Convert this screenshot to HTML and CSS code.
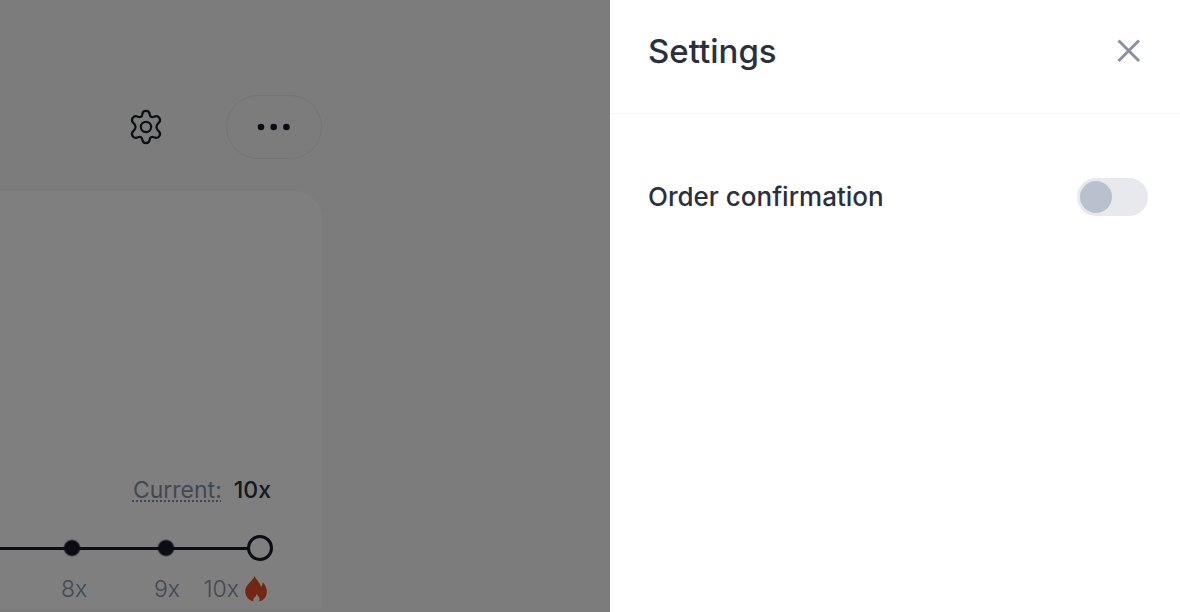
FILE: index.html
```html
<!DOCTYPE html>
<html lang="en">
<head>
<meta charset="utf-8">
<meta name="viewport" content="width=device-width, initial-scale=1">
<title>Settings</title>
<link rel="stylesheet" href="styles.css">
</head>
<body>
<main class="page">
  <div class="toolbar">
    <button class="icon-button" type="button" aria-label="Open settings">
      <svg class="gear" viewBox="0 0 36 36" aria-hidden="true">
        <circle cx="18" cy="18" r="5.1"/>
        <path d="M14.3 5.3C14.5 3 15.9 1.9 18 1.9S21.5 3 21.7 5.3C21.9 7.7 23.8 8.6 25.9 7.7C28.4 6.7 30.4 6.8 31.6 9.3C32.8 11.7 32 13 30.2 14.4C27.9 16.3 27.9 19.7 30.2 21.6C32 23 32.8 24.3 31.6 26.7C30.4 29.2 28.4 29.3 25.9 28.3C23.8 27.4 21.9 28.3 21.7 30.7C21.5 33 20.1 34.1 18 34.1S14.5 33 14.3 30.7C14.1 28.3 12.2 27.4 10.1 28.3C7.6 29.3 5.6 29.2 4.4 26.7C3.2 24.3 4 23 5.8 21.6C8.1 19.7 8.1 16.3 5.8 14.4C4 13 3.2 11.7 4.4 9.3C5.6 6.8 7.6 6.7 10.1 7.7C12.2 8.6 14.1 7.7 14.3 5.3Z"/>
      </svg>
    </button>
    <button class="more-button" type="button" aria-label="More">
      <svg class="dots" viewBox="0 0 34 8" aria-hidden="true"><circle cx="4" cy="4" r="3.3"/><circle cx="16.7" cy="4" r="3.3"/><circle cx="29.4" cy="4" r="3.3"/></svg>
    </button>
  </div>
  <section class="card">
    <p class="current"><abbr class="current-label" title="Current multiplier">Current:</abbr><strong class="current-value">10x</strong></p>
    <input class="slider" type="range" min="7" max="10" value="10" aria-label="Multiplier">
    <div class="scale">
      <span class="scale-step">8x</span>
      <span class="scale-near">9x</span>
      <span class="scale-max">10x<svg class="flame" viewBox="0 0 22 26" aria-hidden="true"><path d="M9.6 0C10.8 3.2 14.9 6.2 15.8 10.6C17.6 9.7 17.6 7.8 17.5 6C20.4 8.5 22 12.2 21.8 16.4C21.6 20.7 18.7 24.3 14.3 25.3C15.4 21.4 13.4 21 11.6 18C11.1 20 10.6 20.8 9.5 21.5C8.4 22.3 8 23.8 8.4 25.4C3.4 24.2.4 20.2.2 15.5C0 8.8 7.5 5.5 9.6 0Z"/></svg></span>
    </div>
  </section>
</main>
<div class="backdrop"></div>
<aside class="drawer" role="dialog" aria-labelledby="drawer-title">
  <header class="drawer-header">
    <h1 class="drawer-title" id="drawer-title">Settings</h1>
    <button class="close-button" type="button" aria-label="Close">
      <svg class="cross" viewBox="0 0 24 24" aria-hidden="true"><path d="M1.5 1.5L22 22M22 1.5L1.5 22"/></svg>
    </button>
  </header>
  <div class="setting">
    <label class="setting-label" for="order-confirmation">Order confirmation</label>
    <input class="switch" id="order-confirmation" type="checkbox" role="switch">
  </div>
</aside>
</body>
</html>
```
FILE: styles.css
```css
* { box-sizing: border-box; }
body {
  margin: 0;
  background: #f9f9f9;
  color: #2a303d;
  font-family: Inter, "Liberation Sans", sans-serif;
  overflow: hidden;
}
button { padding: 0; border: 0; background: none; cursor: pointer; }
svg { display: block; }

.page {
  width: 322px;
  min-height: 100vh;
  padding-top: 95px;
}
.toolbar {
  display: flex;
  justify-content: flex-end;
  align-items: center;
  gap: 62px;
}
.gear { width: 36px; height: 36px; fill: none; stroke: #171b26; stroke-width: 2.2; }
.more-button {
  display: grid;
  place-items: center;
  width: 96px;
  height: 64px;
  border: 1px solid #e8e8ea;
  border-radius: 32px;
}
.dots { width: 34px; height: 8px; fill: #171b26; }
.card {
  margin-top: 32px;
  padding: 283px 49px 4px 0;
  border-radius: 0 28px 0 0;
  background: #fff;
}
.current {
  display: flex;
  justify-content: flex-end;
  gap: 12px;
  margin: 0 2px 0 0;
  font-size: 23px;
  line-height: 32px;
}
.current-label {
  color: #8791a1;
  text-decoration: underline dotted 2px;
  text-underline-offset: 2px;
}
.current-value { font-weight: 500; }
.slider {
  display: block;
  width: calc(100% + 34px);
  height: 26px;
  margin: 29px 0 0 -34px;
  appearance: none;
  background:
    radial-gradient(circle, #171b26 0 7px, #171b2600 9px) 59px 50% / 94px 18px repeat-x,
    linear-gradient(#171b26, #171b26) 0 50% / calc(100% - 20px) 3px no-repeat;
}
.slider::-webkit-slider-thumb {
  appearance: none;
  width: 26px;
  height: 26px;
  border: 3px solid #171b26;
  border-radius: 50%;
  background: #fff;
}
.scale {
  display: flex;
  justify-content: flex-end;
  margin: 12px 6px 0 0;
  color: #8791a1;
  font-size: 23px;
  font-weight: 300;
  line-height: 32px;
}
.scale-step { width: 93px; }
.scale-near { width: 45px; }
.scale-max {
  display: flex;
  align-items: center;
  justify-content: flex-end;
  gap: 6px;
  width: 68px;
}
.flame { width: 22px; height: 26px; fill: #e44d28; }

.backdrop { position: fixed; inset: 0; background: rgb(0 0 0 / 50%); }
.drawer {
  position: fixed;
  inset: 0 0 0 auto;
  width: 570px;
  background: #fff;
}
.drawer-header {
  display: flex;
  align-items: flex-start;
  justify-content: space-between;
  padding: 30px 39px 41px 38px;
  border-bottom: 1px solid #f5f5f6;
}
.drawer-title { margin: 0; font-size: 33px; font-weight: 500; line-height: 42px; }
.close-button { padding: 9px 0; }
.cross { width: 24px; height: 24px; fill: none; stroke: #8992a4; stroke-width: 3; }
.setting {
  display: flex;
  align-items: center;
  justify-content: space-between;
  padding: 64px 32px 0 38px;
}
.setting-label { font-size: 26px; font-weight: 500; line-height: 38px; }
.switch {
  appearance: none;
  width: 71px;
  height: 38px;
  margin: 0;
  padding: 3px;
  border-radius: 19px;
  background: #e7e9ed;
  cursor: pointer;
}
.switch::before {
  content: "";
  display: block;
  width: 32px;
  height: 32px;
  border-radius: 50%;
  background: #b9c1ce;
}
.switch:checked::before { margin-left: auto; }
```
